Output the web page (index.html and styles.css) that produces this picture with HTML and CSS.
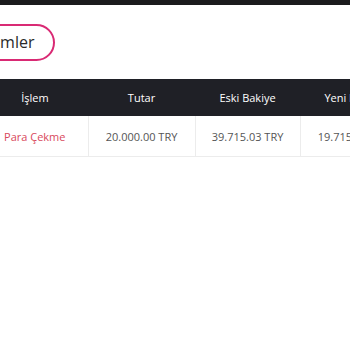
FILE: index.html
```html
<!DOCTYPE html>
<html lang="tr">
<head>
<meta charset="utf-8">
<link rel="stylesheet" href="styles.css">
</head>
<body>
<div class="topbar"></div>
<div class="page">
  <div class="actions">
    <button class="pill">İşlemler</button>
  </div>
  <table class="tx">
    <thead>
      <tr>
        <th class="c1">İşlem</th>
        <th class="c2">Tutar</th>
        <th class="c3">Eski Bakiye</th>
        <th class="c4">Yeni Bakiye</th>
      </tr>
    </thead>
    <tbody>
      <tr>
        <td class="type">Para Çekme</td>
        <td>20.000.00 TRY</td>
        <td>39.715.03 TRY</td>
        <td>19.715.03 TRY</td>
      </tr>
    </tbody>
  </table>
</div>
</body>
</html>
```
FILE: styles.css
```css
html, body {
  margin: 0;
  padding: 0;
  background: #fff;
  font-family: "Open Sans", "DejaVu Sans", sans-serif;
  overflow: hidden;
}
.topbar {
  height: 5px;
  background: #1b1b1d;
}
.page {
  margin-left: -18px;
  width: 500px;
}
.actions {
  padding-top: 19px;
  margin-left: -27px;
}
.pill {
  font-family: "Open Sans", sans-serif;
  font-size: 16px;
  color: #2a2a2a;
  background: #fff;
  border: 2px solid #d92a74;
  border-radius: 20px;
  height: 37px;
  padding: 0 18px;
  line-height: 33px;
}
.tx {
  margin-top: 18px;
  border-collapse: collapse;
  table-layout: fixed;
  width: 425px;
}
.tx th {
  background: #1f2026;
  color: #fff;
  font-weight: 400;
  font-size: 11px;
  height: 37px;
  padding: 0;
  text-align: center;
}
.c1 { width: 106px; }
.c2 { width: 107px; }
.c3 { width: 105px; }
.c4 { width: 107px; }
.tx td {
  height: 40px;
  padding: 0;
  text-align: center;
  font-size: 11px;
  color: #555;
  border-right: 1px solid #ececec;
  border-bottom: 1px solid #ececec;
}
.tx td.type {
  color: #d9485c;
}
```
